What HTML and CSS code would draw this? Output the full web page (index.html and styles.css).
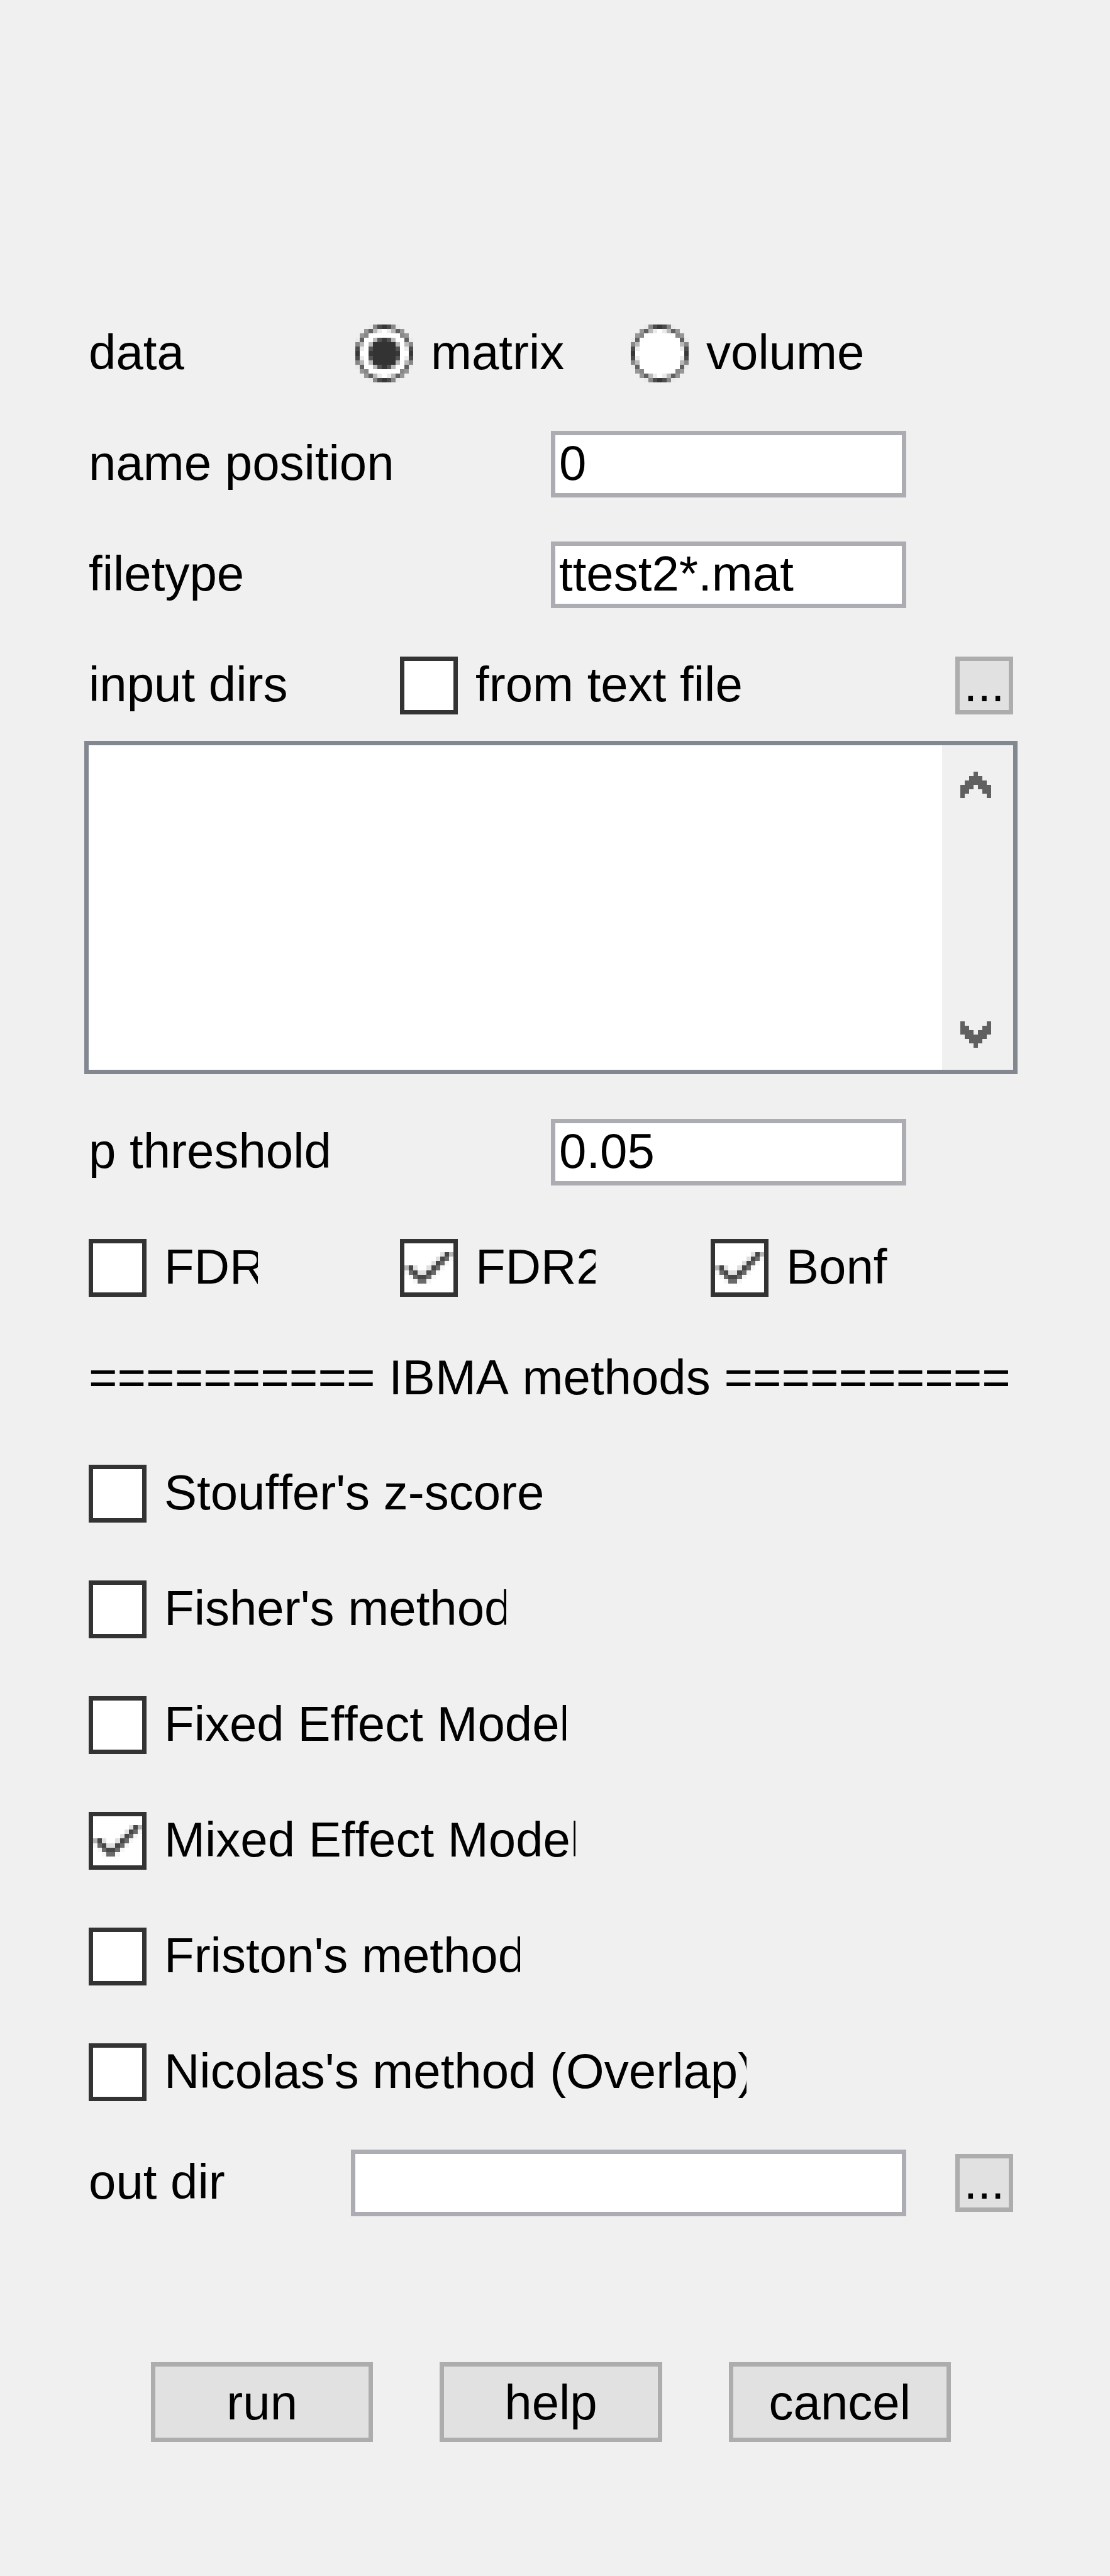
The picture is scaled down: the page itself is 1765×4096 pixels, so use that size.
FILE: index.html
```html
<!DOCTYPE html>
<html lang="en">
<head>
  <meta charset="utf-8">
  <title>IBMA</title>
  <link rel="stylesheet" href="styles.css">
</head>
<body>
  <form class="panel">
    <div class="row data-row" role="radiogroup" aria-labelledby="data-label">
      <span class="text" id="data-label">data</span>
      <label class="option"><input class="radio" type="radio" name="data" value="matrix" checked><span class="text">matrix</span></label>
      <label class="option"><input class="radio" type="radio" name="data" value="volume"><span class="text">volume</span></label>
    </div>

    <div class="row field-row">
      <label class="text" for="name-position">name position</label>
      <input class="field" id="name-position" type="text" value="0">
    </div>

    <div class="row field-row">
      <label class="text" for="filetype">filetype</label>
      <input class="field" id="filetype" type="text" value="ttest2*.mat">
    </div>

    <div class="row dirs-row">
      <label class="text" for="input-dirs">input dirs</label>
      <label class="option"><input class="check" type="checkbox"><span class="text">from text file</span></label>
      <button class="button browse" type="button" aria-label="Browse input dirs">...</button>
    </div>

    <div class="list">
      <textarea class="list-text" id="input-dirs"></textarea>
      <div class="scrollbar">
        <button class="scroll-button" type="button" aria-label="Scroll up">
          <svg class="arrow" viewBox="0 0 7 6" shape-rendering="crispEdges"><path d="M3 0h1v1h1v1h1v1h1v3h-1v-1h-1v-1h-1v-1h-1v1h-1v1h-1v1h-1v-3h1v-1h1v-1h1z"/></svg>
        </button>
        <button class="scroll-button" type="button" aria-label="Scroll down">
          <svg class="arrow" viewBox="0 0 7 6" shape-rendering="crispEdges"><path d="M3 6h1v-1h1v-1h1v-1h1v-3h-1v1h-1v1h-1v1h-1v-1h-1v-1h-1v-1h-1v3h1v1h1v1h1z"/></svg>
        </button>
      </div>
    </div>

    <div class="row field-row">
      <label class="text" for="threshold">p threshold</label>
      <input class="field" id="threshold" type="text" value="0.05">
    </div>

    <div class="row corrections">
      <label class="option"><input class="check" type="checkbox"><span class="text clip clip-fdr">FDR</span></label>
      <label class="option"><input class="check" type="checkbox" checked><span class="text clip clip-fdr2">FDR2</span></label>
      <label class="option"><input class="check" type="checkbox" checked><span class="text">Bonf</span></label>
    </div>

    <h2 class="heading text">========== IBMA methods ==========</h2>

    <div class="methods">
      <label class="option"><input class="check" type="checkbox"><span class="text">Stouffer's z-score</span></label>
      <label class="option"><input class="check" type="checkbox"><span class="text clip clip-fisher">Fisher's method</span></label>
      <label class="option"><input class="check" type="checkbox"><span class="text clip clip-fixed">Fixed Effect Model</span></label>
      <label class="option"><input class="check" type="checkbox" checked><span class="text clip clip-mixed">Mixed Effect Model</span></label>
      <label class="option"><input class="check" type="checkbox"><span class="text clip clip-friston">Friston's method</span></label>
      <label class="option"><input class="check" type="checkbox"><span class="text clip clip-nicolas">Nicolas's method (Overlap)</span></label>
    </div>

    <div class="row out-row">
      <label class="text" for="out-dir">out dir</label>
      <input class="field" id="out-dir" type="text">
      <button class="button browse" type="button" aria-label="Browse out dir">...</button>
    </div>

    <div class="actions">
      <button class="button action" type="button">run</button>
      <button class="button action" type="button">help</button>
      <button class="button action" type="button">cancel</button>
    </div>
  </form>
</body>
</html>
```
FILE: styles.css
```css
* {
  box-sizing: border-box;
}

body {
  margin: 0;
  background: #f0f0f0;
  color: #000;
  font: 78px/92px "Liberation Sans", Arial, sans-serif;
  font-kerning: none;
  font-variant-ligatures: none;
}

input,
textarea,
button {
  margin: 0;
  border-radius: 0;
  color: inherit;
  font: inherit;
  font-kerning: none;
  font-variant-ligatures: none;
}

.panel {
  padding: 474px 154px 213px 141px;
}

.text {
  padding-bottom: 4px;
  white-space: nowrap;
}

/* Rows */

.row {
  display: grid;
  align-items: center;
  height: 176px;
}

.data-row {
  grid-template-columns: 424fr 438fr 608fr;
}

.field-row {
  grid-template-columns: 735fr 565fr 170fr;
}

.dirs-row {
  grid-template-columns: 495fr 883fr 92px;
}

.corrections {
  grid-template-columns: 495fr 494fr 481fr;
  height: 184px;
  margin-top: 4px;
}

.out-row {
  grid-template-columns: 417fr 883fr 78fr 92px;
  height: 168px;
}

.out-row .browse {
  grid-column: 4;
}

.heading {
  height: 168px;
  margin: 0;
  font-size: 78px;
  font-weight: normal;
  line-height: 164px;
}

.methods {
  display: grid;
  grid-auto-rows: 184px;
  justify-items: start;
  margin-top: 7px;
}

/* Radio buttons and tick boxes */

.option {
  display: flex;
  align-items: center;
  gap: 28px;
}

.check,
.radio {
  flex: none;
  width: 92px;
  height: 92px;
  appearance: none;
  background: center / 100% 100% no-repeat;
}

.check {
  border: 7px solid #333;
  background-color: #fff;
}

.check:checked {
  background-image: url("data:image/svg+xml,%3Csvg xmlns='http://www.w3.org/2000/svg' viewBox='0 0 11 11' preserveAspectRatio='none' shape-rendering='crispEdges'%3E%3Cpath stroke='%23f6f6f6' d='M10 3.5h1M9 4.5h1M8 5.5h1M0 6.5h1M7 6.5h1M1 7.5h1M6 7.5h1M2 8.5h1M5 8.5h1'/%3E%3Cpath stroke='%23e0e0e0' d='M8 2.5h1M7 3.5h1M6 4.5h1M2 5.5h1M5 5.5h1M3 6.5h2'/%3E%3Cpath stroke='%23b4b4b4' d='M10 2.5h1M0 5.5h1'/%3E%3Cpath stroke='%236a6a6a' d='M9 3.5h1M8 4.5h1M7 5.5h1M1 6.5h1M6 6.5h1M2 7.5h1M5 7.5h1M3 8.5h2'/%3E%3Cpath stroke='%23474747' d='M9 2.5h1M8 3.5h1M7 4.5h1M1 5.5h1M6 5.5h1M2 6.5h1M5 6.5h1M3 7.5h2'/%3E%3C/svg%3E");
}

.radio {
  background-image: url("data:image/svg+xml,%3Csvg xmlns='http://www.w3.org/2000/svg' viewBox='0 0 13 13' preserveAspectRatio='none' shape-rendering='crispEdges'%3E%3Cpath fill='%23fff' d='M2 2h9v9h-9zM6 1h1v11h-1zM1 6h11v1h-11z'/%3E%3Cpath stroke='%23ebebeb' d='M3 .5h1M9 .5h1M0 3.5h1M12 3.5h1M0 9.5h1M12 9.5h1M3 12.5h1M9 12.5h1M5 1.5h1M7 1.5h1M1 5.5h1M11 5.5h1M1 7.5h1M11 7.5h1M5 11.5h1M7 11.5h1'/%3E%3Cpath stroke='%23b8b8b8' d='M4 1.5h1M8 1.5h1M1 4.5h1M11 4.5h1M1 8.5h1M11 8.5h1M4 11.5h1M8 11.5h1'/%3E%3Cpath stroke='%23979797' d='M2 1.5h1M10 1.5h1M1 2.5h1M11 2.5h1M1 10.5h1M11 10.5h1M2 11.5h1M10 11.5h1'/%3E%3Cpath stroke='%23888' d='M4 .5h1M8 .5h1M2 2.5h1M10 2.5h1M0 4.5h1M12 4.5h1M0 8.5h1M12 8.5h1M2 10.5h1M10 10.5h1M4 12.5h1M8 12.5h1'/%3E%3Cpath stroke='%23616161' d='M3 1.5h1M9 1.5h1M1 3.5h1M11 3.5h1M1 9.5h1M11 9.5h1M3 11.5h1M9 11.5h1'/%3E%3Cpath stroke='%234c4c4c' d='M5 .5h1M7 .5h1M0 5.5h1M12 5.5h1M0 7.5h1M12 7.5h1M5 12.5h1M7 12.5h1'/%3E%3Cpath stroke='%23383838' d='M6 .5h1M0 6.5h1M12 6.5h1M6 12.5h1'/%3E%3C/svg%3E");
}

/* The dot is a second layer over the ring's white centre */
.radio:checked {
  position: relative;
}

.radio:checked::after {
  content: "";
  position: absolute;
  inset: 0;
  background: center / 100% 100% no-repeat url("data:image/svg+xml,%3Csvg xmlns='http://www.w3.org/2000/svg' viewBox='0 0 13 13' preserveAspectRatio='none' shape-rendering='crispEdges'%3E%3Cpath fill='%23333' d='M4 4h5v5h-5z'/%3E%3Cpath stroke='%23b8b8b8' d='M4 3.5h1M8 3.5h1M3 4.5h1M9 4.5h1M3 8.5h1M9 8.5h1M4 9.5h1M8 9.5h1'/%3E%3Cpath stroke='%23545454' d='M5 3.5h1M7 3.5h1M3 5.5h1M9 5.5h1M3 7.5h1M9 7.5h1M5 9.5h1M7 9.5h1'/%3E%3Cpath stroke='%23383838' d='M6 3.5h1M3 6.5h1M9 6.5h1M6 9.5h1'/%3E%3C/svg%3E");
}

/* Captions that are cut off at the edge of their control */

.clip {
  overflow: hidden;
}

.clip-fdr {
  width: 149px;
}

.clip-fdr2 {
  width: 191px;
}

.clip-fisher {
  width: 544px;
}

.clip-fixed {
  width: 639px;
}

.clip-mixed {
  width: 654px;
}

.clip-friston {
  width: 566px;
}

.clip-nicolas {
  width: 926px;
}

/* Text boxes */

.field {
  width: 100%;
  height: 106px;
  padding: 0 6px 4px;
  border: 7px solid #abadb3;
  background: #fff;
}

.list {
  display: flex;
  height: 530px;
  margin: 0 -7px 36px;
  border: 7px solid #828790;
  background: #fff;
}

.list-text {
  flex: 1;
  min-width: 0;
  padding: 0 6px;
  border: 0;
  background: #fff;
  resize: none;
}

.scrollbar {
  display: flex;
  flex-direction: column;
  justify-content: space-between;
  width: 113px;
  padding: 7px 7px 0 0;
  background: #f0f0f0;
}

.scroll-button {
  display: grid;
  place-items: center;
  height: 112px;
  padding: 0;
  border: 0;
  background: none;
}

.arrow {
  width: 49px;
  height: 42px;
  fill: #606060;
}

/* Buttons */

.button {
  padding: 0;
  border: 7px solid #adadad;
  background: #e1e1e1;
}

.browse {
  width: 92px;
  height: 92px;
  padding-bottom: 4px;
  line-height: 74px;
}

.actions {
  display: grid;
  grid-template-columns: repeat(3, 1fr);
  gap: 106px;
  margin: 201px 99px 0;
}

.action {
  height: 127px;
}
```
